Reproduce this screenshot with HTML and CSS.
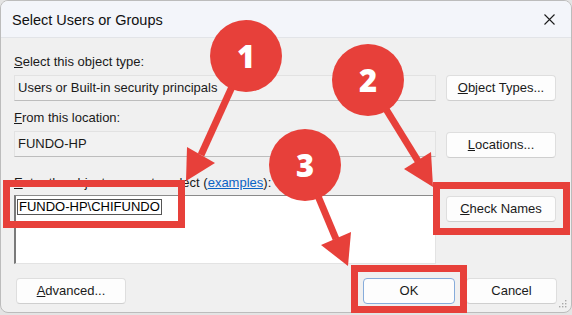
FILE: index.html
```html
<!DOCTYPE html>
<html lang="en">
<head>
    <meta charset="UTF-8">
    <meta name="viewport" content="width=device-width, initial-scale=1.0">
    <title>Select Users or Groups</title>
    <link rel="stylesheet" href="styles.css">
</head>
<body>
    <div class="window">
        <div class="titlebar">
            <span class="title">Select Users or Groups</span>
            <svg class="close" width="11" height="11" viewBox="0 0 11 11">
                <path d="M0.5 0.5 L10.5 10.5 M10.5 0.5 L0.5 10.5" stroke="#1c1c1c" stroke-width="1.1" fill="none"/>
            </svg>
        </div>

        <div class="content">
            <div class="section">
                <div class="label"><u>S</u>elect this object type:</div>
                <div class="row">
                    <div class="field">Users or Built-in security principals</div>
                    <div class="btn"><u>O</u>bject Types...</div>
                </div>
            </div>

            <div class="section second">
                <div class="label"><u>F</u>rom this location:</div>
                <div class="row">
                    <div class="field">FUNDO-HP</div>
                    <div class="btn low"><u>L</u>ocations...</div>
                </div>
            </div>

            <div class="section third">
                <div class="label"><u>E</u>nter the object names to select (<a class="link" href="#">examples</a>):</div>
                <div class="row">
                    <div class="names"><span class="picked">FUNDO-HP\CHIFUNDO</span></div>
                    <div class="btn check"><u>C</u>heck Names</div>
                </div>
            </div>
        </div>

        <div class="footer">
            <div class="btn"><u>A</u>dvanced...</div>
            <div class="btn ok">OK</div>
            <div class="btn cancel">Cancel</div>
        </div>

        <svg class="grip" width="8" height="8" viewBox="0 0 8 8">
            <rect x="6" y="0" width="1.4" height="1.4" fill="#a8a8a8"/>
            <rect x="3" y="3" width="1.4" height="1.4" fill="#a8a8a8"/>
            <rect x="6" y="3" width="1.4" height="1.4" fill="#a8a8a8"/>
            <rect x="0" y="6" width="1.4" height="1.4" fill="#a8a8a8"/>
            <rect x="3" y="6" width="1.4" height="1.4" fill="#a8a8a8"/>
            <rect x="6" y="6" width="1.4" height="1.4" fill="#a8a8a8"/>
        </svg>
    </div>

    <!-- tutorial markup drawn over the dialog -->
    <svg class="marks" width="572" height="315" viewBox="0 0 572 315">
        <g fill="none" stroke="#e7403a" stroke-width="7">
            <rect x="6.5" y="183.5" width="175" height="41"/>
            <rect x="436.5" y="185.5" width="130" height="46"/>
            <rect x="354.5" y="268.5" width="109" height="41"/>
            <line x1="246" y1="56" x2="201" y2="155"/>
            <line x1="368" y1="80" x2="418" y2="161"/>
            <line x1="305" y1="165" x2="336" y2="239"/>
        </g>
        <g fill="#e7403a">
            <polygon points="186,181 215,163 187,147"/>
            <polygon points="433,187 431,152 404,169"/>
            <polygon points="348,266 351,232 321,245"/>
            <circle cx="246" cy="56" r="36"/>
            <circle cx="368" cy="80" r="36"/>
            <circle cx="305" cy="165" r="36"/>
        </g>
        <g class="num" fill="#ffffff" text-anchor="middle">
            <text x="246" y="67.5">1</text>
            <text x="368" y="91.5">2</text>
            <text x="305" y="176.5">3</text>
        </g>
    </svg>
</body>
</html>
```

FILE: styles.css
```css
body {
    margin: 0;
    background: #e4e4e4;
    font-family: 'Liberation Sans', Arial, sans-serif;
    font-size: 13px;
    color: #1a1a1a;
    position: relative;
    width: 572px;
    height: 315px;
    overflow: hidden;
}
.window {
    position: relative;
    width: 572px;
    height: 313px;
    box-sizing: border-box;
    background: #f0f0f0;
    border: 1px solid #bcbcbc;
    border-radius: 8px;
    overflow: hidden;
}
.titlebar {
    height: 37px;
    display: flex;
    align-items: center;
    padding-left: 11px;
    padding-right: 16px;
    background: #f3f5fa;
    border-bottom: 1px solid #e2e4e8;
    box-sizing: border-box;
}
.title {
    font-size: 14.5px;
    color: #111;
    margin-top: 1px;
}
.close {
    margin-left: auto;
    margin-top: 1px;
}
.content {
    padding: 15px 15px 0 13px;
}
.section.second {
    margin-top: 8px;
}
.section.third {
    margin-top: 16px;
}
.label {
    height: 18px;
    line-height: 18px;
    margin-bottom: 4px;
    white-space: nowrap;
}
.section.third .label {
    margin-bottom: 3px;
}
.link {
    color: #0b63c5;
    text-decoration: underline;
}
.row {
    display: flex;
    align-items: flex-start;
    gap: 10px;
}
.field {
    width: 422px;
    height: 26px;
    line-height: 24px;
    box-sizing: border-box;
    padding-left: 3px;
    background: #f2f2f2;
    border: 1px solid #e2e2e2;
    border-bottom-color: #bdbdbd;
}
.btn {
    width: 110px;
    height: 26px;
    line-height: 24px;
    box-sizing: border-box;
    text-align: center;
    background: #fdfdfd;
    border: 1px solid #dedede;
    border-bottom-color: #cfcfcf;
    border-radius: 4px;
    white-space: nowrap;
}
.btn.low {
    margin-top: 1px;
}
.btn.check {
    margin-top: 1px;
}
.names {
    width: 422px;
    height: 69px;
    box-sizing: border-box;
    background: #ffffff;
    border: 1px solid #e3e3e3;
    border-top-color: #8a8a8a;
    border-left: 2px solid #7a7a7a;
    padding: 3px 0 0 1px;
}
.picked {
    display: inline-block;
    line-height: 14px;
    padding: 0 1px 0 1px;
    border: 1px solid #555;
    color: #000;
}
.footer {
    display: flex;
    margin-top: 14px;
    padding: 0 14px 0 15px;
}
.btn.ok {
    width: 92px;
    margin-left: auto;
    border-color: #86acdb;
}
.btn.cancel {
    width: 91px;
    margin-left: 11px;
}
.grip {
    position: absolute;
    right: 4px;
    bottom: 4px;
}
.marks {
    position: absolute;
    top: 0;
    left: 0;
}
.num {
    font-family: 'Open Sans', 'Liberation Sans', sans-serif;
    font-weight: 800;
    font-size: 31px;
}
```
